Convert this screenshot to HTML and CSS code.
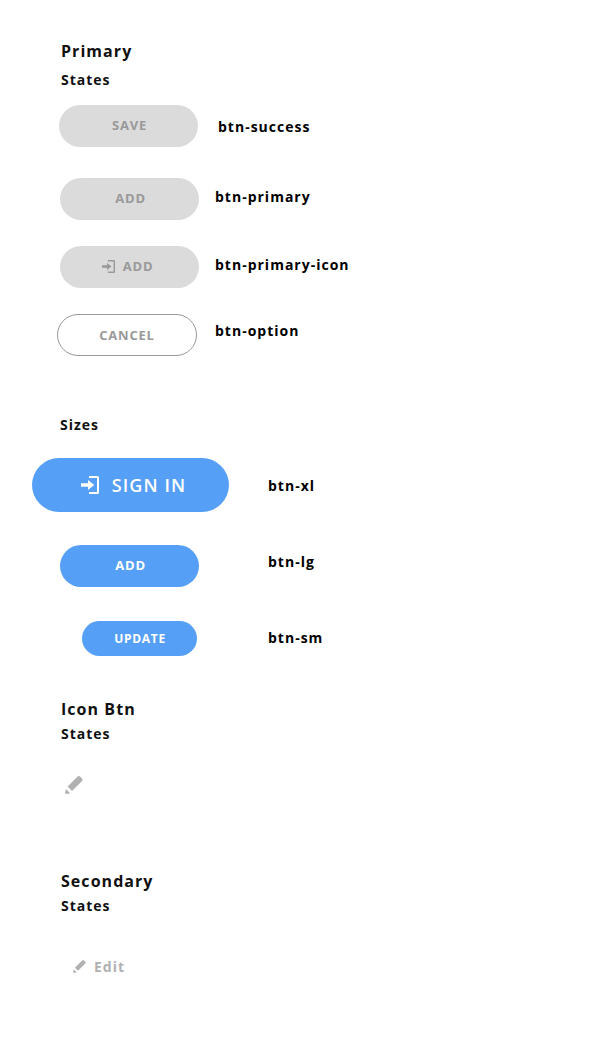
FILE: index.html
```html
<!DOCTYPE html>
<html lang="en">
<head>
<meta charset="utf-8">
<title>Buttons</title>
<link rel="stylesheet" href="styles.css">
</head>
<body>
<svg width="0" height="0" class="defs" aria-hidden="true">
  <symbol id="enter" viewBox="0 0 18 18"><path d="M8 0h8.500a1.500 1.500 0 0 1 1.500 1.500v15a1.500 1.500 0 0 1-1.500 1.500H8v-2h8V2H8zM0 7.200h7V4l6.200 5L7 14v-3.200H0z" fill="currentColor"/></symbol>
  <symbol id="pencil" viewBox="0 0 18 18"><path d="M12.600 .6a1.800 1.800 0 0 1 2.500 0l1.900 1.900a1.800 1.800 0 0 1 0 2.500L7 15 2.600 10.600zM1 13l3.900 3.900-1 .8H.6a.6.600 0 0 1-.6-.6z" fill="currentColor"/></symbol>
</svg>
<main>
  <section class="primary">
    <h1 class="title">Primary</h1>
    <h2 class="subtitle">States</h2>
    <div class="row row-success"><button class="btn disabled">SAVE</button><span class="label">btn-success</span></div>
    <div class="row row-primary"><button class="btn disabled">ADD</button><span class="label">btn-primary</span></div>
    <div class="row row-icon"><button class="btn disabled"><svg class="icon"><use href="#enter"/></svg>ADD</button><span class="label">btn-primary-icon</span></div>
    <div class="row row-option"><button class="btn option">CANCEL</button><span class="label">btn-option</span></div>
  </section>
  <section class="sizes">
    <h2 class="subtitle">Sizes</h2>
    <div class="row row-xl"><button class="btn xl"><svg class="icon"><use href="#enter"/></svg>SIGN IN</button><span class="label">btn-xl</span></div>
    <div class="row row-lg"><button class="btn">ADD</button><span class="label">btn-lg</span></div>
    <div class="row row-sm"><button class="btn sm">UPDATE</button><span class="label">btn-sm</span></div>
  </section>
  <section class="icon-section">
    <h1 class="title">Icon Btn</h1>
    <h2 class="subtitle">States</h2>
    <button class="icon-btn" aria-label="Edit"><svg class="icon"><use href="#pencil"/></svg></button>
  </section>
  <section class="secondary">
    <h1 class="title">Secondary</h1>
    <h2 class="subtitle">States</h2>
    <button class="link-btn"><svg class="icon"><use href="#pencil"/></svg>Edit</button>
  </section>
</main>
</body>
</html>
```
FILE: styles.css
```css
* { box-sizing: border-box; }
body { margin: 0; background: #fff; color: #111; font-family: "Open Sans", "Noto Sans", sans-serif; font-weight: 700; }
.defs { display: none; }
main { height: 1060px; padding-top: 41px; }
.title, .subtitle { margin: 0 0 0 61px; font-weight: 700; line-height: 20px; }
.title { font-size: 16px; letter-spacing: 1.05px; }
.subtitle { font-size: 14px; letter-spacing: 1px; }
.label { font-size: 14px; line-height: 20px; letter-spacing: 1px; color: #000; }
.row { display: flex; align-items: flex-start; }
button { border: 0; padding: 0; background: none; font: inherit; }
.icon { display: block; flex: none; }
.btn { display: flex; align-items: center; justify-content: center; width: 139px; height: 42px; padding: 0 0 2px 2px; border-radius: 21px; background: #569ff7; color: #fff; font-size: 13px; letter-spacing: .8px; }
.disabled { background: #dbdbdb; color: #999; }
.btn .icon { width: 13px; height: 13px; margin: 1px 8px 0 0; }
.row-icon .btn { padding-right: 4px; padding-left: 0; }
.option { width: 140px; padding: 0; background: #fff; border: 1px solid #999; color: #999; }
.xl { width: 197px; height: 54px; padding: 0 0 0 6px; border-radius: 27px; font-size: 18px; font-weight: 600; letter-spacing: 1.1px; }
.xl .icon { width: 18px; height: 18px; margin: 0 13px 0 0; }
.sm { width: 115px; height: 35px; padding: 0 0 0 1px; border-radius: 18px; font-size: 12px; letter-spacing: .7px; }

.primary .subtitle { margin-top: 9px; }
.row-success { margin: 15px 0 0 59px; }
.row-success .label { margin: 12px 0 0 20px; }
.row-primary { margin: 31px 0 0 60px; }
.row-primary .label { margin: 9px 0 0 16px; }
.row-icon { margin: 26px 0 0 60px; }
.row-icon .label { margin: 9px 0 0 16px; }
.row-option { margin: 26px 0 0 57px; }
.row-option .label { margin: 7px 0 0 18px; }

.sizes { padding-top: 59px; }
.sizes .subtitle { margin-left: 60px; }
.row-xl { margin: 23px 0 0 32px; }
.row-xl .label { margin: 18px 0 0 39px; }
.row-lg { margin: 33px 0 0 60px; }
.row-lg .label { margin: 7px 0 0 69px; }
.row-sm { margin: 34px 0 0 82px; }
.row-sm .label { margin: 7px 0 0 71px; }

.icon-section { padding-top: 43px; }
.icon-section .subtitle, .secondary .subtitle { margin-top: 5px; }
.icon-btn { display: block; margin: 32px 0 0 65px; width: 18px; height: 18px; color: #b1b1b1; }
.icon-btn .icon { width: 18px; height: 18px; }
.secondary { padding-top: 77px; }
.link-btn { display: flex; align-items: center; margin: 40px 0 0 73px; height: 20px; color: #b1b1b1; font-size: 14px; letter-spacing: 1px; }
.link-btn .icon { width: 13px; height: 13px; margin-right: 8px; }
```
